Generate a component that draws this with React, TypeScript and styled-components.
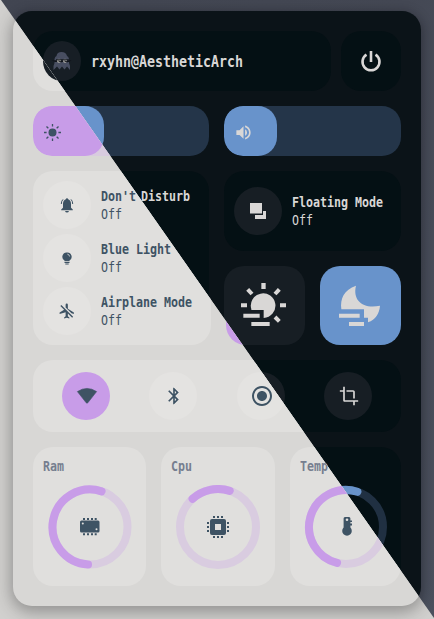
import React from "react";
import styled, { createGlobalStyle, ThemeProvider } from "styled-components";
import { MdVolumeUp, MdBluetooth, MdRadioButtonChecked, MdCrop } from "react-icons/md";

const dark = {
  desktop: "linear-gradient(100deg, #414551 0%, #444854 75%, #4a505d 100%)",
  shadow: "0 3px 12px 1px rgba(12, 12, 20, 0.42)",
  panel: "#0b1318",
  card: "#041014",
  button: "#171e24",
  text: "#d9d7d6",
  label: "#767e8f",
  accent: "#6893cb",
  track: "#243549",
  ringTrack: "#203042",
  sunTile: "#171e24",
  moonTile: "#6893cb",
  columns: "176px 177px",
  listInset: "8px",
  floatingInset: "10px",
};

const light = {
  ...dark,
  desktop: "#d1d0ce",
  shadow: "0 4px 16px 2px rgba(50, 50, 50, 0.4)",
  panel: "#d8d7d5",
  card: "#e0dfdd",
  button: "#e4e3e1",
  text: "#3e5364",
  accent: "#c89ce8",
  track: "#d8cbdf",
  ringTrack: "#d9cce0",
  sunTile: "#c89ce8",
  moonTile: "#e4e3e1",
  columns: "178px 175px",
  listInset: "10px",
  floatingInset: "8px",
};

const GlobalStyle = createGlobalStyle`
  * { box-sizing: border-box; }
  body { margin: 0; overflow: hidden; }
  svg { display: block; flex: none; }
`;

const Stage = styled.main`
  position: relative;
  width: 434px;
  height: 619px;
  overflow: hidden;
`;

const LightHalf = styled.div`
  position: absolute;
  inset: 0;
  clip-path: polygon(0 0, 1px 0, 434px 618px, 434px 619px, 0 619px);
`;

const Desktop = styled.div`
  width: 434px;
  height: 619px;
  padding: 11px 13px 13px;
  background: ${({ theme }) => theme.desktop};
  font-family: "DejaVu Sans Mono", monospace;
  color: ${({ theme }) => theme.text};
`;

const Panel = styled.section`
  display: flex;
  flex-direction: column;
  gap: 15px;
  width: 408px;
  height: 595px;
  padding: 20px;
  border-radius: 19px;
  background: ${({ theme }) => theme.panel};
  box-shadow: ${({ theme }) => theme.shadow};
`;

const Card = styled.div`
  border-radius: 20px;
  background: ${({ theme }) => theme.card};
`;

const Header = styled.header`
  display: grid;
  grid-template-columns: 298px 60px;
  gap: 10px;
  height: 60px;
`;

const UserCard = styled(Card)`
  display: flex;
  align-items: center;
  padding-left: 10px;
  gap: 10px;
`;

const PowerCard = styled(Card)`
  display: grid;
  place-items: center;
`;

const Avatar = styled.div`
  display: grid;
  place-items: center;
  width: 38px;
  height: 40px;
  border-radius: 50%;
  background: #171e25;
`;

const Condensed = styled.span<{ $size: number; $bold?: boolean }>`
  display: block;
  white-space: pre;
  font-size: ${({ $size }) => $size}px;
  font-weight: ${({ $bold }) => ($bold ? 700 : 400)};
  line-height: 18px;
  transform: scaleX(0.8306);
  transform-origin: left center;
`;

const UserName = styled(Condensed)`
  padding-top: 1px;
`;

const RingLabel = styled(Condensed)`
  align-self: flex-start;
  color: ${({ theme }) => theme.label};
`;

const Sliders = styled.div`
  display: grid;
  grid-template-columns: 176px 177px;
  gap: 15px;
  height: 50px;
`;

const Track = styled.div`
  overflow: hidden;
  border-radius: 19px;
  background: ${({ theme }) => theme.track};
`;

const Fill = styled.div<{ $width: number }>`
  display: flex;
  align-items: center;
  width: ${({ $width }) => $width}px;
  height: 100%;
  padding: 2px 0 0 10px;
  border-radius: 19px;
  background: ${({ theme }) => theme.accent};
`;

const Controls = styled.div`
  display: grid;
  grid-template-columns: ${({ theme }) => theme.columns};
  gap: 15px;
  height: 174px;
`;

const ToggleList = styled(Card)`
  display: flex;
  flex-direction: column;
  gap: 5px;
  padding: 10px 0 10px ${({ theme }) => theme.listInset};
`;

const ToggleRow = styled.div`
  display: flex;
  align-items: center;
  gap: 10px;
  height: 48px;
`;

const ToggleText = styled.div`
  width: 95px;
`;

const RightColumn = styled.div`
  display: grid;
  grid-template-rows: 80px 79px;
  gap: 15px;
`;

const FloatingCard = styled(Card)`
  display: flex;
  align-items: center;
  padding-left: ${({ theme }) => theme.floatingInset};
`;

const Round = styled.div<{ $active?: boolean }>`
  display: grid;
  flex: none;
  place-items: center;
  width: 48px;
  height: 48px;
  border-radius: 50%;
  background: ${({ theme, $active }) => ($active ? theme.accent : theme.button)};
`;

const QuickButton = styled(Round)`
  padding-left: 2px;
`;

const Tiles = styled.div`
  display: grid;
  grid-template-columns: 1fr 1fr;
  gap: 15px;
`;

const Tile = styled.div<{ $kind: "sunTile" | "moonTile" }>`
  display: grid;
  place-items: center;
  overflow: hidden;
  border-radius: 20px;
  background: ${({ theme, $kind }) => theme[$kind]};
`;

const QuickBar = styled(Card)`
  display: flex;
  align-items: center;
  justify-content: space-between;
  height: 72px;
  padding: 0 29px;
`;

const Rings = styled.div`
  display: grid;
  grid-template-columns: 113px 114px 111px;
  gap: 15px;
  height: 139px;
`;

const RingCard = styled(Card)`
  display: flex;
  flex-direction: column;
  align-items: center;
  padding: 10px 10px 0;
`;

const RingSvg = styled.svg`
  margin-top: 10px;

  .track { stroke: ${({ theme }) => theme.ringTrack}; }
  .value { stroke: ${({ theme }) => theme.accent}; }
  .hole { fill: ${({ theme }) => theme.card}; }
`;

const Ghost = () => (
  <svg width="22" height="20" viewBox="0 0 22 20">
    <path d="M2.5 19V15L3.5 12V8Q4 5.500 5.500 5Q6 1 10.500 1Q15 1 16 5Q17.500 5.500 18 8V12L19 15V19L16 15.500L13.500 18.500L11 15.500L8.500 18.500L6 15.500Z" fill="#484e61" />
    <path d="M0.500 9.300H20.500L18 11H4Z" fill="#10141b" />
    <circle cx="8" cy="9.8" r="2.100" fill="#a3a29e" />
    <circle cx="14" cy="9.8" r="2.100" fill="#a3a29e" />
    <path d="M5 8.8H18M7.5 10L10.5 11M13.5 10L16.5 11" stroke="#11151b" strokeWidth="1" />
  </svg>
);

const Power = () => (
  <svg width="24" height="24" viewBox="0 0 24 24" fill="none" stroke="currentColor" strokeWidth="2.6">
    <path d="M12 2V13M7.5 5.6A8.5 8.5 0 1 0 16.5 5.6" />
  </svg>
);

const rays = [0, 45, 90, 135, 180, 225, 270, 315];

const Brightness = () => (
  <svg width="19" height="19" viewBox="0 0 19 19" fill="currentColor">
    <circle cx="9.5" cy="9.5" r="4" />
    {rays.map((a) => (
      <path key={a} d="M9.5 1V3.6" stroke="currentColor" strokeWidth="1.3" transform={`rotate(${a} 9.5 9.5)`} />
    ))}
  </svg>
);

const Bell = () => (
  <svg width="16" height="16" viewBox="0 0 16 16" fill="currentColor">
    <path d="M8 1.2Q9 1.2 9.2 2.2Q12 3.2 12 6.8V10.8L13.8 12.5V13.3H2.2V12.5L4 10.8V6.8Q4 3.2 6.8 2.2Q7 1.2 8 1.2ZM6 14H10Q9.5 15.5 8 15.5Q6.5 15.5 6 14Z" />
    <path d="M4 2.4Q2.3 4 2.3 7M12 2.4Q13.7 4 13.7 7" fill="none" stroke="currentColor" strokeWidth="1" />
  </svg>
);

const Bulb = () => (
  <svg width="12" height="16" viewBox="0 1 12 14">
    <path d="M6 2.500A4.300 4.300 0 0 1 8.500 10.500V11.300H3.500V10.500A4.300 4.300 0 0 1 6 2.500ZM3.500 11.900H8.500V13.100H3.500ZM4.300 13.600H7.700V14.500H4.300Z" fill="currentColor" />
    <path d="M6.300 4.100A2.700 2.700 0 0 1 8.600 6.500" fill="none" stroke="#dddddc" strokeWidth="0.8" />
  </svg>
);

const AirplaneOff = () => (
  <svg width="18" height="18" viewBox="0 0 24 24" fill="currentColor">
    <path d="M3.15 5.27L8.13 10.26L2.15 14V16L10.15 13.5V19L8.15 20.5V22L11.65 21L15.15 22V20.5L13.15 19V15.27L18.87 21L20.15 19.73L4.42 4ZM13.15 9V3.5A1.5 1.5 0 0 0 10.15 3.5V7.18L17.97 15L21.15 16V14Z" />
  </svg>
);

const Windows = () => (
  <svg width="16" height="16" viewBox="0 0 16 16" fill="currentColor">
    <path d="M0 0H12V10.5H0ZM13 8H16V16H5V12H13Z" />
  </svg>
);

const SunHaze = () => (
  <svg width="81" height="79" viewBox="21 318 243 237" fill="currentColor">
    <path d="M103 448A37 37 0 1 1 140 474V450H103Z" />
    <path d="M133 369h13v18h-13zM72 430h18v12H72zM189 430h18v12h-18zM79 461h49v12H79zM103 486h55v12h-55z" />
    <path d="M92 388L105 402M187 388L174 402M174 471L187 484" stroke="currentColor" strokeWidth="12" />
  </svg>
);

const MoonHaze = () => (
  <svg width="81" height="79" viewBox="309 318 243 237" fill="currentColor">
    <path d="M417 377C381 389 369 416 373 448H441V473H453V487C476 478 487 461 489 437C438 448 406 421 417 377Z" />
    <path d="M366 461h62v12h-62zM396 486h45v12h-45z" />
  </svg>
);

const Wifi = () => (
  <svg width="22" height="18" viewBox="0 0 22 18">
    <path d="M1.4 4.6Q11 -1.8 20.6 4.6L11.8 15.8Q11 16.7 10.2 15.8Z" fill="currentColor" stroke="currentColor" strokeWidth="0.6" />
  </svg>
);

const RamGlyph = () => (
  <g fill="currentColor">
    <rect x="32" y="35.5" width="19.5" height="12" rx="1.5" />
    <path d="M35 33h2v2h-2zM39 33h2v2h-2zM43 33h2v2h-2zM46.7 33h2v2h-2zM35 48.2h2v2h-2zM39 48.2h2v2h-2zM43 48.2h2v2h-2zM46.7 48.2h2v2h-2z" />
    <circle className="hole" cx="34.8" cy="38.5" r="1" />
    <circle className="hole" cx="48.5" cy="44.3" r="1" />
  </g>
);

const CpuGlyph = () => (
  <g fill="currentColor">
    <rect x="34" y="34" width="16" height="16" rx="2" />
    <rect className="hole" x="39" y="39" width="6" height="6" />
    <path d="M37 31h2v2h-2zM41 31h2v2h-2zM45 31h2v2h-2zM37 51h2v2h-2zM41 51h2v2h-2zM45 51h2v2h-2zM31 37h2v2h-2zM31 41h2v2h-2zM31 45h2v2h-2zM51 37h2v2h-2zM51 41h2v2h-2zM51 45h2v2h-2z" />
  </g>
);

const TempGlyph = () => (
  <g fill="currentColor">
    <path d="M39.6 42.5V33.5Q39.6 32 41 32H45Q46.4 32 46.4 33.5V35.5H48V37H46.4V38.5H48V40.5H46.4V42.5A4.8 4.8 0 1 1 39.6 42.5Z" />
    <circle className="hole" cx="43" cy="34.8" r="1.3" />
  </g>
);

const polar = (angle: number, r: number) => {
  const t = (angle * Math.PI) / 180;
  return `${42 + r * Math.cos(t)} ${42 + r * Math.sin(t)}`;
};

type RingProps = { label: string; radius: number; start: number; children: React.ReactNode };

const Ring = ({ label, radius, start, children }: RingProps) => (
  <RingCard>
    <RingLabel $size={14} $bold>{label}</RingLabel>
    <RingSvg width="84" height="84" viewBox="0 0 84 84" fill="none" strokeWidth="8" strokeLinecap="round">
      <circle className="track" cx="42" cy="42" r={radius} />
      <path
        className="value"
        d={`M${polar(start, radius)}A${radius} ${radius} 0 ${288 - start > 180 ? 1 : 0} 1 ${polar(288, radius)}`}
      />
      {children}
    </RingSvg>
  </RingCard>
);

const Toggle = ({ icon, title }: { icon: React.ReactNode; title: string }) => (
  <ToggleRow>
    <Round>{icon}</Round>
    <ToggleText>
      <Condensed $size={14} $bold>{title}</Condensed>
      <Condensed $size={14}>Off</Condensed>
    </ToggleText>
  </ToggleRow>
);

const Dashboard = () => (
  <Desktop>
    <Panel>
      <Header>
        <UserCard>
          <Avatar><Ghost /></Avatar>
          <UserName $size={16} $bold>rxyhn@AestheticArch</UserName>
        </UserCard>
        <PowerCard><Power /></PowerCard>
      </Header>
      <Sliders>
        <Track><Fill $width={71}><Brightness /></Fill></Track>
        <Track><Fill $width={53}><MdVolumeUp size={19} /></Fill></Track>
      </Sliders>
      <Controls>
        <ToggleList>
          <Toggle icon={<Bell />} title="Don't Disturb" />
          <Toggle icon={<Bulb />} title="Blue Light" />
          <Toggle icon={<AirplaneOff />} title="Airplane Mode" />
        </ToggleList>
        <RightColumn>
          <FloatingCard><Toggle icon={<Windows />} title="Floating Mode" /></FloatingCard>
          <Tiles>
            <Tile $kind="sunTile"><SunHaze /></Tile>
            <Tile $kind="moonTile"><MoonHaze /></Tile>
          </Tiles>
        </RightColumn>
      </Controls>
      <QuickBar>
        <QuickButton $active><Wifi /></QuickButton>
        <QuickButton><MdBluetooth size={20} /></QuickButton>
        <QuickButton><MdRadioButtonChecked size={24} /></QuickButton>
        <QuickButton><MdCrop size={20} /></QuickButton>
      </QuickBar>
      <Rings>
        <Ring label="Ram" radius={37.5} start={93}><RamGlyph /></Ring>
        <Ring label="Cpu" radius={38} start={228}><CpuGlyph /></Ring>
        <Ring label="Temp" radius={37} start={104}><TempGlyph /></Ring>
      </Rings>
    </Panel>
  </Desktop>
);

export default function App() {
  return (
    <>
      <GlobalStyle />
      <Stage>
        <ThemeProvider theme={dark}><Dashboard /></ThemeProvider>
        <LightHalf>
          <ThemeProvider theme={light}><Dashboard /></ThemeProvider>
        </LightHalf>
      </Stage>
    </>
  );
}
